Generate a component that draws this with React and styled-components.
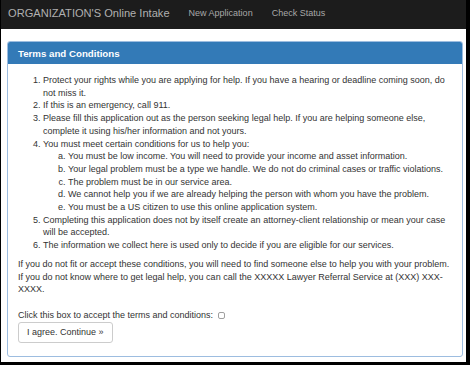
import React from 'react'
import styled, { createGlobalStyle } from 'styled-components'

const GlobalStyle = createGlobalStyle`
  html, body {
    margin: 0;
    padding: 0;
    background: #000;
  }
  body {
    font-family: "Liberation Sans", Arial, sans-serif;
    color: #333;
  }
`

const Frame = styled.div`
  box-sizing: border-box;
  width: 470px;
  height: 365px;
  border-left: 1px solid #000;
  border-right: 4px solid #000;
  border-bottom: 3px solid #000;
  background: #fff;
  overflow: hidden;
`

const Navbar = styled.nav`
  display: flex;
  align-items: center;
  height: 29px;
  padding: 0 7px;
  background: #1c1c1c;
`

const Brand = styled.span`
  font-size: 11.1px;
  color: #b0b0b0;
  margin-right: 19px;
  margin-top: -3px;
`

const NavLink = styled.a`
  font-size: 9px;
  color: #a8a8a8;
  text-decoration: none;
  margin-right: 19px;
  margin-top: -3px;
`

const Panel = styled.section`
  margin: 12px 3px 0 6px;
  border: 1px solid #9dbde0;
  border-radius: 3px;
  overflow: hidden;
`

const PanelHeading = styled.h3`
  margin: 0;
  height: 22px;
  display: flex;
  align-items: center;
  padding: 0 10px;
  background: #337ab7;
  color: #fff;
  font-size: 9.7px;
  font-weight: bold;
`

const PanelBody = styled.div`
  padding: 10px 10px 13px;
  font-size: 9px;
  line-height: 12.7px;
`

const List = styled.ol`
  margin: 0 0 ${p => (p.$alpha ? 0 : 6)}px;
  padding-left: 25px;
  list-style-type: ${p => (p.$alpha ? 'lower-alpha' : 'decimal')};
`

const Para = styled.p`
  margin: 0 0 ${p => p.$gap || 0}px;
`

const Check = styled.input`
  appearance: none;
  box-sizing: border-box;
  width: 7px;
  height: 7px;
  margin: 0 0 0 2px;
  border: 1px solid #a0a0a0;
  border-radius: 2px;
  background: #fff;
  vertical-align: -1px;
`

const Button = styled.button`
  height: 21px;
  padding: 0 8px;
  border: 1px solid #ccc;
  border-radius: 3px;
  background: #fff;
  color: #333;
  font-family: inherit;
  font-size: 9px;
`

const App = () => {
  return (
    <Frame>
      <GlobalStyle />
      <Navbar>
        <Brand>ORGANIZATION'S Online Intake</Brand>
        <NavLink href="#">New Application</NavLink>
        <NavLink href="#">Check Status</NavLink>
      </Navbar>
      <Panel>
        <PanelHeading>Terms and Conditions</PanelHeading>
        <PanelBody>
          <List>
            <li>Protect your rights while you are applying for help. If you have a hearing or deadline coming soon, do not miss it.</li>
            <li>If this is an emergency, call 911.</li>
            <li>Please fill this application out as the person seeking legal help. If you are helping someone else, complete it using his/her information and not yours.</li>
            <li>
              You must meet certain conditions for us to help you:
              <List $alpha>
                <li>You must be low income. You will need to provide your income and asset information.</li>
                <li>Your legal problem must be a type we handle. We do not do criminal cases or traffic violations.</li>
                <li>The problem must be in our service area.</li>
                <li>We cannot help you if we are already helping the person with whom you have the problem.</li>
                <li>You must be a US citizen to use this online application system.</li>
              </List>
            </li>
            <li>Completing this application does not by itself create an attorney-client relationship or mean your case will be accepted.</li>
            <li>The information we collect here is used only to decide if you are eligible for our services.</li>
          </List>
          <Para $gap={13}>
            If you do not fit or accept these conditions, you will need to find someone else to help you with your problem.
            If you do not know where to get legal help, you can call the XXXXX Lawyer Referral Service at (XXX) XXX-XXXX.
          </Para>
          <Para>
            Click this box to accept the terms and conditions: <Check type="checkbox" />
          </Para>
          <Button>I agree. Continue »</Button>
        </PanelBody>
      </Panel>
    </Frame>
  )
}

export default App
